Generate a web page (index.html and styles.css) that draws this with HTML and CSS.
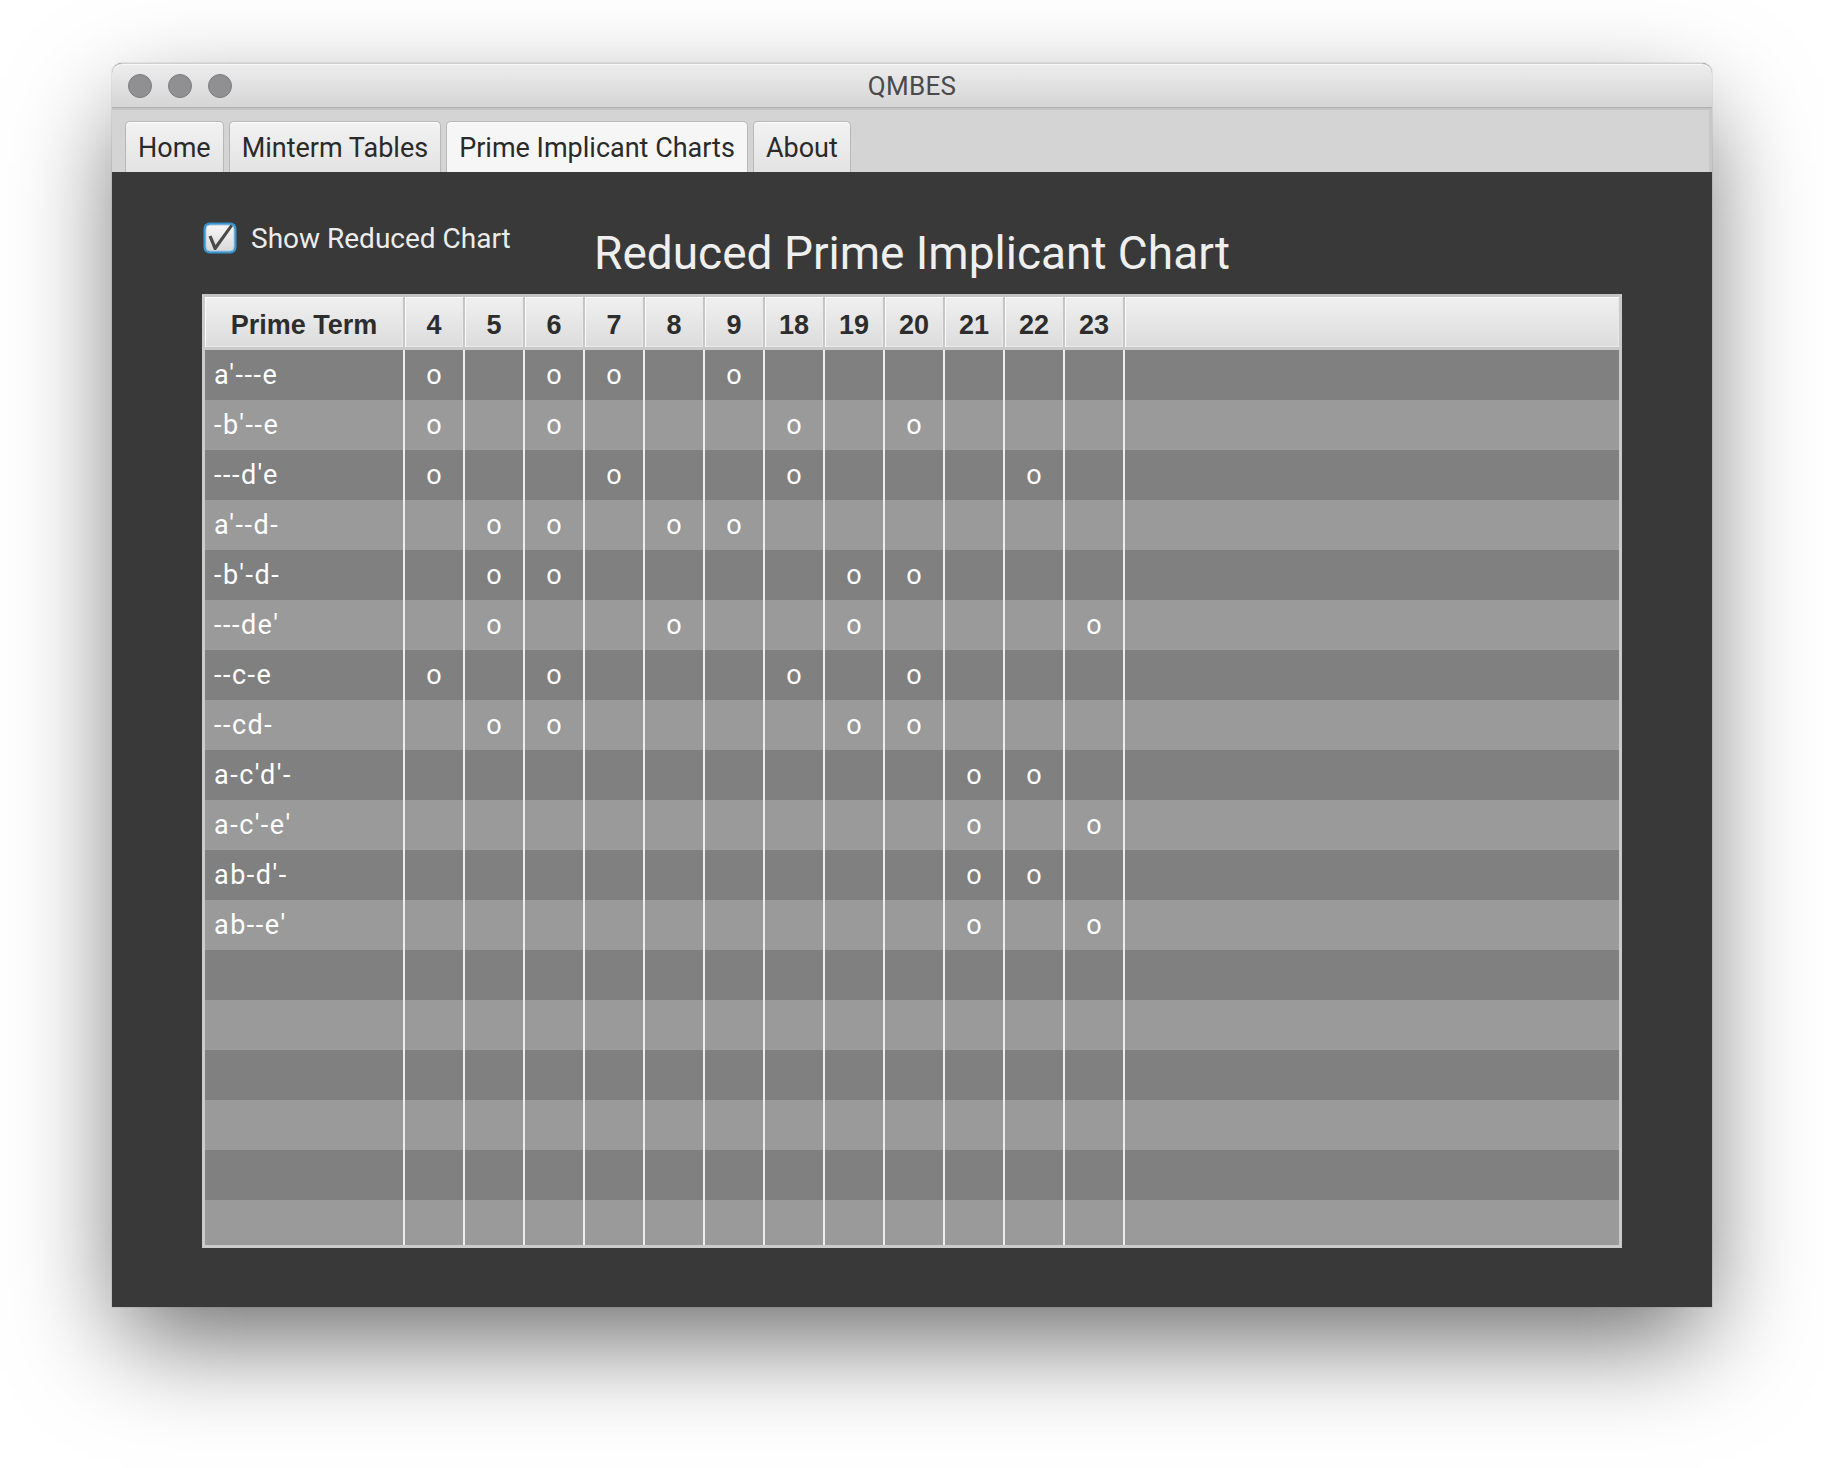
FILE: index.html
```html
<!DOCTYPE html>
<html lang="en">
<head>
<meta charset="utf-8">
<title>QMBES</title>
<link rel="stylesheet" href="styles.css">
</head>
<body>
<div class="page">
  <div class="window">
    <div class="titlebar">
      <div class="lights"><span class="light"></span><span class="light"></span><span class="light"></span></div>
      <div class="wtitle">QMBES</div>
      <div></div>
    </div>
    <div class="tabbar">
      <div class="tab">Home</div>
      <div class="tab">Minterm Tables</div>
      <div class="tab selected">Prime Implicant Charts</div>
      <div class="tab">About</div>
    </div>
    <div class="content">
      <div class="top">
        <label class="check">
          <svg class="box" width="36" height="34" viewBox="0 0 36 34">
            <defs>
              <linearGradient id="bg" x1="0" y1="0" x2="0" y2="1">
                <stop offset="0" stop-color="#f7f7f7"/>
                <stop offset="1" stop-color="#d9d9d9"/>
              </linearGradient>
            </defs>
            <rect x="1.5" y="1.5" width="33" height="31" rx="6" fill="#3a9ee0" opacity="0.9"/>
            <rect x="4" y="4" width="28" height="26" rx="4" fill="url(#bg)" stroke="#a9c9e0" stroke-width="1"/>
            <path d="M6.5 15.5 L9.5 14.5 L13.5 24 L28.5 3.5 L31 5 L14 29 L12 29 Z" fill="#4a4a4a"/>
          </svg>
          <span class="label">Show Reduced Chart</span>
        </label>
        <h1>Reduced Prime Implicant Chart</h1>
        <div></div>
      </div>
      <div class="chart">
        <div class="head">
          <div class="hc">Prime Term</div>
          <div class="hc">4</div><div class="hc">5</div><div class="hc">6</div><div class="hc">7</div><div class="hc">8</div><div class="hc">9</div>
          <div class="hc">18</div><div class="hc">19</div><div class="hc">20</div><div class="hc">21</div><div class="hc">22</div><div class="hc">23</div>
          <div class="hc fill"></div>
        </div>
        <div class="rows">
          <div class="row"><div class="c term">a'---e</div><div class="c">o</div><div class="c"></div><div class="c">o</div><div class="c">o</div><div class="c"></div><div class="c">o</div><div class="c"></div><div class="c"></div><div class="c"></div><div class="c"></div><div class="c"></div><div class="c"></div><div class="c fill"></div></div>
          <div class="row"><div class="c term">-b'--e</div><div class="c">o</div><div class="c"></div><div class="c">o</div><div class="c"></div><div class="c"></div><div class="c"></div><div class="c">o</div><div class="c"></div><div class="c">o</div><div class="c"></div><div class="c"></div><div class="c"></div><div class="c fill"></div></div>
          <div class="row"><div class="c term">---d'e</div><div class="c">o</div><div class="c"></div><div class="c"></div><div class="c">o</div><div class="c"></div><div class="c"></div><div class="c">o</div><div class="c"></div><div class="c"></div><div class="c"></div><div class="c">o</div><div class="c"></div><div class="c fill"></div></div>
          <div class="row"><div class="c term">a'--d-</div><div class="c"></div><div class="c">o</div><div class="c">o</div><div class="c"></div><div class="c">o</div><div class="c">o</div><div class="c"></div><div class="c"></div><div class="c"></div><div class="c"></div><div class="c"></div><div class="c"></div><div class="c fill"></div></div>
          <div class="row"><div class="c term">-b'-d-</div><div class="c"></div><div class="c">o</div><div class="c">o</div><div class="c"></div><div class="c"></div><div class="c"></div><div class="c"></div><div class="c">o</div><div class="c">o</div><div class="c"></div><div class="c"></div><div class="c"></div><div class="c fill"></div></div>
          <div class="row"><div class="c term">---de'</div><div class="c"></div><div class="c">o</div><div class="c"></div><div class="c"></div><div class="c">o</div><div class="c"></div><div class="c"></div><div class="c">o</div><div class="c"></div><div class="c"></div><div class="c"></div><div class="c">o</div><div class="c fill"></div></div>
          <div class="row"><div class="c term">--c-e</div><div class="c">o</div><div class="c"></div><div class="c">o</div><div class="c"></div><div class="c"></div><div class="c"></div><div class="c">o</div><div class="c"></div><div class="c">o</div><div class="c"></div><div class="c"></div><div class="c"></div><div class="c fill"></div></div>
          <div class="row"><div class="c term">--cd-</div><div class="c"></div><div class="c">o</div><div class="c">o</div><div class="c"></div><div class="c"></div><div class="c"></div><div class="c"></div><div class="c">o</div><div class="c">o</div><div class="c"></div><div class="c"></div><div class="c"></div><div class="c fill"></div></div>
          <div class="row"><div class="c term">a-c'd'-</div><div class="c"></div><div class="c"></div><div class="c"></div><div class="c"></div><div class="c"></div><div class="c"></div><div class="c"></div><div class="c"></div><div class="c"></div><div class="c">o</div><div class="c">o</div><div class="c"></div><div class="c fill"></div></div>
          <div class="row"><div class="c term">a-c'-e'</div><div class="c"></div><div class="c"></div><div class="c"></div><div class="c"></div><div class="c"></div><div class="c"></div><div class="c"></div><div class="c"></div><div class="c"></div><div class="c">o</div><div class="c"></div><div class="c">o</div><div class="c fill"></div></div>
          <div class="row"><div class="c term">ab-d'-</div><div class="c"></div><div class="c"></div><div class="c"></div><div class="c"></div><div class="c"></div><div class="c"></div><div class="c"></div><div class="c"></div><div class="c"></div><div class="c">o</div><div class="c">o</div><div class="c"></div><div class="c fill"></div></div>
          <div class="row"><div class="c term">ab--e'</div><div class="c"></div><div class="c"></div><div class="c"></div><div class="c"></div><div class="c"></div><div class="c"></div><div class="c"></div><div class="c"></div><div class="c"></div><div class="c">o</div><div class="c"></div><div class="c">o</div><div class="c fill"></div></div>
          <div class="row"><div class="c term"></div><div class="c"></div><div class="c"></div><div class="c"></div><div class="c"></div><div class="c"></div><div class="c"></div><div class="c"></div><div class="c"></div><div class="c"></div><div class="c"></div><div class="c"></div><div class="c"></div><div class="c fill"></div></div>
          <div class="row"><div class="c term"></div><div class="c"></div><div class="c"></div><div class="c"></div><div class="c"></div><div class="c"></div><div class="c"></div><div class="c"></div><div class="c"></div><div class="c"></div><div class="c"></div><div class="c"></div><div class="c"></div><div class="c fill"></div></div>
          <div class="row"><div class="c term"></div><div class="c"></div><div class="c"></div><div class="c"></div><div class="c"></div><div class="c"></div><div class="c"></div><div class="c"></div><div class="c"></div><div class="c"></div><div class="c"></div><div class="c"></div><div class="c"></div><div class="c fill"></div></div>
          <div class="row"><div class="c term"></div><div class="c"></div><div class="c"></div><div class="c"></div><div class="c"></div><div class="c"></div><div class="c"></div><div class="c"></div><div class="c"></div><div class="c"></div><div class="c"></div><div class="c"></div><div class="c"></div><div class="c fill"></div></div>
          <div class="row"><div class="c term"></div><div class="c"></div><div class="c"></div><div class="c"></div><div class="c"></div><div class="c"></div><div class="c"></div><div class="c"></div><div class="c"></div><div class="c"></div><div class="c"></div><div class="c"></div><div class="c"></div><div class="c fill"></div></div>
          <div class="row"><div class="c term"></div><div class="c"></div><div class="c"></div><div class="c"></div><div class="c"></div><div class="c"></div><div class="c"></div><div class="c"></div><div class="c"></div><div class="c"></div><div class="c"></div><div class="c"></div><div class="c"></div><div class="c fill"></div></div>
        </div>
      </div>
    </div>
  </div>
</div>
</body>
</html>
```

FILE: styles.css
```css
html, body {
  margin: 0;
  padding: 0;
  background: #ffffff;
}

body {
  font-family: Roboto, "Liberation Sans", sans-serif;
}

.page {
  width: 1824px;
  height: 1468px;
  box-sizing: border-box;
  padding: 63px 0 0 112px;
  overflow: hidden;
}

.window {
  width: 1600px;
  height: 1244px;
  display: flex;
  flex-direction: column;
  background: #393939;
  border-radius: 10px 10px 0 0;
  box-shadow: 0 40px 100px -10px rgba(0, 0, 0, 0.6), 0 0 0 1px rgba(0, 0, 0, 0.06);
}

.titlebar {
  flex: none;
  height: 45px;
  box-sizing: border-box;
  display: grid;
  grid-template-columns: 1fr auto 1fr;
  align-items: center;
  padding: 0 16px;
  background: linear-gradient(#ededed, #d5d5d5);
  border-radius: 10px 10px 0 0;
  border-top: 1px solid #cfcfcf;
  border-bottom: 1px solid #b0b0b0;
  box-shadow: inset 0 1px 0 #f7f7f7;
}

.lights {
  display: flex;
  gap: 16px;
  margin-top: 1px;
}

.light {
  width: 24px;
  height: 24px;
  box-sizing: border-box;
  border-radius: 50%;
  background: #909093;
  border: 1px solid #7c7c80;
}

.wtitle {
  font-size: 26px;
  color: #4a4a4a;
  letter-spacing: 0.3px;
}

.tabbar {
  flex: none;
  height: 64px;
  box-sizing: border-box;
  display: flex;
  align-items: flex-end;
  gap: 5px;
  padding-left: 13px;
  background: #d4d4d4;
  box-shadow: inset 0 2px 0 #c4c4c4, inset -3px 0 0 #c8c8c8;
}

.tab {
  height: 51px;
  box-sizing: border-box;
  padding: 10px 12px 0;
  font-size: 27px;
  color: #2a2a2a;
  background: linear-gradient(#f2f2f2, #e3e3e3);
  border: 1px solid #b8b8b8;
  border-bottom: none;
  border-radius: 5px 5px 0 0;
  box-shadow: inset 0 1px 0 #fcfcfc;
}

.tab.selected {
  background: #f6f6f6;
}

.content {
  flex: 1;
  display: flex;
  flex-direction: column;
  padding: 49px 90px 59px;
}

.top {
  flex: none;
  height: 73px;
  display: grid;
  grid-template-columns: 1fr auto 1fr;
  align-items: start;
}

.check {
  display: flex;
  align-items: flex-start;
  gap: 13px;
  font-size: 28px;
  color: #ececec;
}

.check .box {
  display: block;
  flex: none;
}

.check .label {
  margin-top: 1px;
}

h1 {
  margin: 5px 0 0;
  font-size: 46px;
  font-weight: 400;
  color: #efefef;
  white-space: nowrap;
}

.chart {
  flex: none;
  height: 954px;
  box-sizing: border-box;
  border: 3px solid #cbcbcb;
  border-top-color: #c2c2c2;
  background: #9a9a9a;
  overflow: hidden;
}

.head {
  display: grid;
  grid-template-columns: 200px repeat(12, 60px) 1fr;
  height: 53px;
  box-sizing: border-box;
  border-bottom: 3px solid #cacaca;
}

.hc {
  display: flex;
  align-items: center;
  justify-content: center;
  padding-top: 6px;
  background: linear-gradient(#f0f0f0, #dcdcdc);
  border-right: 2px solid #c6c6c6;
  box-shadow: inset 1px 1px 0 #fbfbfb, inset -1px -1px 0 #e9e9e9;
  font-family: "Liberation Sans", Arial, sans-serif;
  font-weight: 700;
  font-size: 27px;
  color: #2d2d2d;
}

.hc.fill {
  border-right: none;
}

.rows {
  height: 895px;
  overflow: hidden;
}

.row {
  display: grid;
  grid-template-columns: 200px repeat(12, 60px) 1fr;
  height: 50px;
  background: #808080;
}

.row:nth-child(even) {
  background: #9a9a9a;
}

.c {
  display: flex;
  align-items: center;
  justify-content: center;
  border-right: 2px solid #ededed;
  color: #ffffff;
  font-size: 27px;
}

.c.term {
  justify-content: flex-start;
  padding-left: 9px;
  letter-spacing: 1.5px;
}

.c.fill {
  border-right: none;
}
```
